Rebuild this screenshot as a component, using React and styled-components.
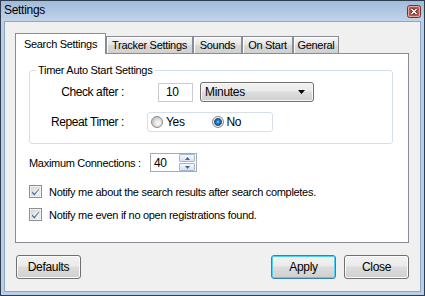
import styled, { createGlobalStyle } from 'styled-components'

const Global = createGlobalStyle`
  body {
    margin: 0;
    font-family: "Liberation Sans", Arial, sans-serif;
    font-size: 11px;
    letter-spacing: -0.3px;
    color: #000;
  }
`

const Window = styled.div`
  width: 425px;
  height: 296px;
  box-sizing: border-box;
  border: 1px solid #2f3d4e;
  background: #b9cfe8;
  display: flex;
  flex-direction: column;
`
const TitleBar = styled.div`
  height: 20px;
  display: flex;
  align-items: center;
  justify-content: space-between;
  padding: 0 3px 0 3px;
  background: linear-gradient(#a1bbd9, #c1d4ea);
`
const Title = styled.span`
  font-size: 12px;
  letter-spacing: -0.3px;
  padding-bottom: 2px;
`
const Frame = styled.div`
  flex: 1;
  display: flex;
  padding: 0 3px 3px;
`
const Client = styled.div`
  flex: 1;
  background: #f0f0f0;
  border: 1px solid #8ea6c2;
  padding: 11px 11px 0 10px;
`
const TabStrip = styled.div`
  display: flex;
  align-items: flex-end;
  height: 20px;
`
const Tab = styled.div`
  position: relative;
  box-sizing: border-box;
  width: ${p => p.$w}px;
  height: ${p => (p.$active ? 21 : 17)}px;
  margin-bottom: ${p => (p.$active ? -1 : 0)}px;
  z-index: ${p => (p.$active ? 1 : 0)};
  border: 1px solid #898c95;
  border-bottom: none;
  background: ${p =>
    p.$active ? '#fff' : 'linear-gradient(#f5f5f5, #e6e6e6 50%, #d9d9d9 51%, #d0d0d0)'};
  box-shadow: ${p => (p.$active ? 'none' : 'inset 1px 1px 0 #fff')};
  display: flex;
  align-items: center;
  justify-content: center;
  padding-bottom: ${p => (p.$active ? 1 : 0)}px;
`
const Panel = styled.div`
  height: 190px;
  box-sizing: border-box;
  border: 1px solid #898c95;
  background: #fff;
  padding: 10px 15px 0 13px;
`
const Group = styled.fieldset`
  margin: 0;
  padding: 0 0 11px;
  border: 1px solid #d5dfe5;
  border-radius: 3px;
  min-width: 0;
`
const Legend = styled.legend`
  margin-left: 6px;
  padding: 0 2px;
  line-height: 13px;
`
const GroupGrid = styled.div`
  display: grid;
  grid-template-columns: 94px auto;
  grid-auto-rows: 20px;
  column-gap: 23px;
  row-gap: 10px;
  align-items: center;
  padding-top: 5px;
`
const RowLabel = styled.span`
  justify-self: end;
  font-size: 12px;
  letter-spacing: -0.4px;
`
const Controls = styled.div`
  display: flex;
  align-items: center;
  gap: 7px;
  margin-left: ${p => p.$indent || 0}px;
`
const TextBox = styled.div`
  box-sizing: border-box;
  width: ${p => p.$w}px;
  height: 19px;
  border: 1px solid #c9ccd2;
  display: flex;
  align-items: center;
  padding-left: 7px;
  font-size: 12px;
`
const Select = styled.div`
  box-sizing: border-box;
  width: 114px;
  height: 20px;
  border: 1px solid #707070;
  border-radius: 3px;
  background: linear-gradient(#f2f2f2, #ebebeb 45%, #dddddd 50%, #cfcfcf);
  box-shadow: inset 0 0 0 1px #f8f8f8;
  display: flex;
  align-items: center;
  justify-content: space-between;
  padding: 0 8px 0 4px;
  font-size: 12px;
`
const RadioFrame = styled.div`
  box-sizing: border-box;
  width: 126px;
  height: 20px;
  border: 1px solid #d5dfe5;
  border-radius: 3px;
  display: flex;
  align-items: center;
  padding-left: 3px;
`
const RadioOption = styled.label`
  width: 71px;
  display: flex;
  align-items: center;
  gap: 3px;
  font-size: 12px;
`
const RadioDot = styled.span`
  box-sizing: border-box;
  width: 12px;
  height: 12px;
  border-radius: 50%;
  border: 1px solid #8b8b8b;
  background: ${p =>
    p.$checked
      ? 'radial-gradient(circle, #7fd8ff 0, #1f86d6 1.6px, #0d4a8a 3.2px, #6b7c8c 3.8px, #f2f2f2 4.4px, #e0e0e0 6px)'
      : 'radial-gradient(circle at 60% 60%, #fafafa 0, #e6e6e6 3px, #c4c4c4 6px)'};
`
const MaxRow = styled.div`
  display: flex;
  align-items: center;
  height: 19px;
  margin-top: 9px;
`
const FieldLabel = styled.span`
  width: 121px;
`
const Spinner = styled.div`
  box-sizing: border-box;
  width: 47px;
  height: 19px;
  border: 1px solid #a4abb4;
  display: flex;
  align-items: center;
  justify-content: space-between;
  padding: 0 1px 0 3px;
  font-size: 12px;
`
const SpinButtons = styled.div`
  display: flex;
  flex-direction: column;
  gap: 1px;
`
const SpinButton = styled.div`
  box-sizing: border-box;
  width: 16px;
  height: 8px;
  border: 1px solid #a7b6c9;
  border-radius: 1px;
  background: linear-gradient(#f3f7fc, #d8e4f2);
  display: flex;
  align-items: center;
  justify-content: center;
`
const CheckRow = styled.div`
  display: flex;
  align-items: center;
  gap: 7px;
  height: 13px;
  margin-top: ${p => p.$top}px;
`
const ButtonRow = styled.div`
  display: flex;
  gap: 8px;
  margin-top: 12px;
  padding-left: 1px;
`
const Button = styled.div`
  box-sizing: border-box;
  width: 65px;
  height: 24px;
  border: 1px solid ${p => (p.$default ? '#3c7fb1' : '#707070')};
  border-radius: 3px;
  background: linear-gradient(#f2f2f2, #ebebeb 45%, #dddddd 50%, #cfcfcf);
  box-shadow: inset 0 0 0 1px ${p => (p.$default ? '#4fd1f5' : '#fbfbfb')};
  display: flex;
  align-items: center;
  justify-content: center;
  font-size: 12px;
  margin-left: ${p => (p.$push ? 'auto' : '0')};
`

const CloseIcon = () => (
  <svg width="14" height="13" viewBox="0 0 14 13">
    <rect x="0.5" y="0.5" width="13" height="12" rx="2" fill="#e6a29b" stroke="#6b3430" />
    <rect x="2" y="2" width="10" height="9" rx="1" fill="#b9584f" />
    <path d="M4.5 4 L9.5 9 M9.5 4 L4.5 9" stroke="#3a1a18" strokeWidth="3" />
    <path d="M4.5 4 L9.5 9 M9.5 4 L4.5 9" stroke="#fff" strokeWidth="1.6" />
  </svg>
)

const Arrow = ({ up, w = 7, h = 4, color = '#000' }) => (
  <svg width={w} height={h} viewBox={`0 0 ${w} ${h}`}>
    <polygon points={up ? `0,${h} ${w},${h} ${w / 2},0` : `0,0 ${w},0 ${w / 2},${h}`} fill={color} />
  </svg>
)

const CheckBox = () => (
  <svg width="13" height="13" viewBox="0 0 13 13">
    <defs>
      <linearGradient id="cbg" x1="0" y1="0" x2="1" y2="1">
        <stop offset="0" stopColor="#d9d9d9" />
        <stop offset="1" stopColor="#fbfbfb" />
      </linearGradient>
      <linearGradient id="cmk" x1="0" y1="0" x2="0" y2="1">
        <stop offset="0" stopColor="#7d98c9" />
        <stop offset="1" stopColor="#33508a" />
      </linearGradient>
    </defs>
    <rect x="0.5" y="0.5" width="12" height="12" fill="#fff" stroke="#8e8f8f" />
    <rect x="2" y="2" width="9" height="9" fill="url(#cbg)" stroke="#c6c6c6" strokeWidth="0.5" />
    <path d="M3 6.3 L5.3 8.8 L10 3.2 L10 4.8 L5.3 10.4 L3 7.9 Z" fill="url(#cmk)" />
  </svg>
)

const tabs = [
  ['Search Settings', 91],
  ['Tracker Settings', 87],
  ['Sounds', 49],
  ['On Start', 51],
  ['General', 46],
]

const App = () => {
  return (
    <Window>
      <Global />
      <TitleBar>
        <Title>Settings</Title>
        <CloseIcon />
      </TitleBar>
      <Frame>
        <Client>
          <TabStrip>
            {tabs.map(([name, w], i) => (
              <Tab key={name} $w={w} $active={i === 0}>{name}</Tab>
            ))}
          </TabStrip>
          <Panel>
            <Group>
              <Legend>Timer Auto Start Settings</Legend>
              <GroupGrid>
                <RowLabel>Check after :</RowLabel>
                <Controls $indent={11}>
                  <TextBox $w={35}>10</TextBox>
                  <Select>
                    <span>Minutes</span>
                    <Arrow />
                  </Select>
                </Controls>
                <RowLabel>Repeat Timer :</RowLabel>
                <RadioFrame>
                  <RadioOption><RadioDot />Yes</RadioOption>
                  <RadioOption><RadioDot $checked />No</RadioOption>
                </RadioFrame>
              </GroupGrid>
            </Group>
            <MaxRow>
              <FieldLabel>Maximum Connections :</FieldLabel>
              <Spinner>
                <span>40</span>
                <SpinButtons>
                  <SpinButton><Arrow up w={5} h={3} color="#4d6185" /></SpinButton>
                  <SpinButton><Arrow w={5} h={3} color="#4d6185" /></SpinButton>
                </SpinButtons>
              </Spinner>
            </MaxRow>
            <CheckRow $top={13}>
              <CheckBox />
              <span>Notify me about the search results after search completes.</span>
            </CheckRow>
            <CheckRow $top={10}>
              <CheckBox />
              <span>Notify me even if no open registrations found.</span>
            </CheckRow>
          </Panel>
          <ButtonRow>
            <Button>Defaults</Button>
            <Button $push $default>Apply</Button>
            <Button>Close</Button>
          </ButtonRow>
        </Client>
      </Frame>
    </Window>
  )
}

export default App
